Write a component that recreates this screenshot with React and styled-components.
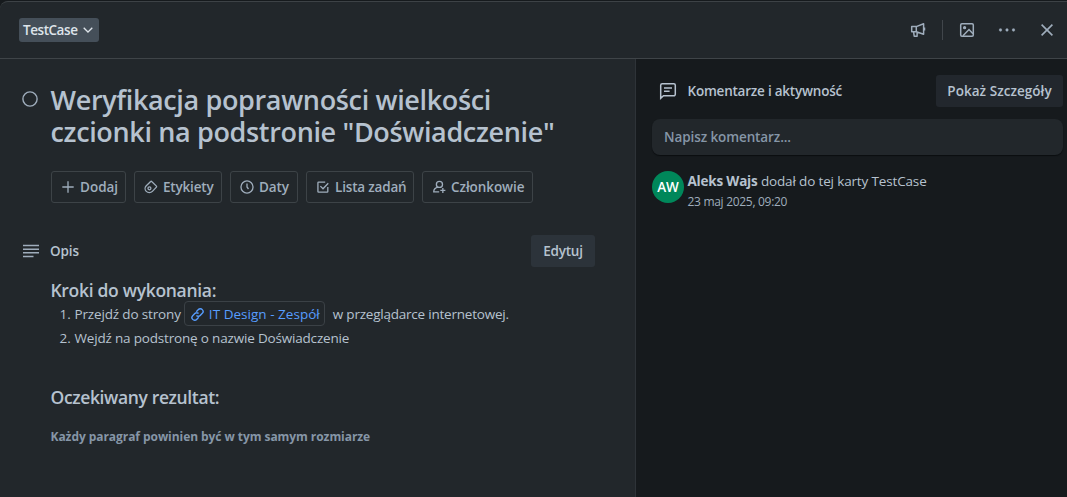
import React from "react";
import styled, { createGlobalStyle } from "styled-components";

const Global = createGlobalStyle`
  * { box-sizing: border-box; }
  body {
    margin: 0;
    background: #161a1d;
    color: #b6c2cf;
    font: 400 13.5px/20px "Open Sans", "Noto Sans", sans-serif;
  }
  h1, h2, h3, p, ol { margin: 0; padding: 0; font-size: inherit; font-weight: inherit; }
  button { font: inherit; color: inherit; }
`;

const Text = styled.span`
  white-space: pre;
  letter-spacing: ${(p) => p.$ls || 0}px;
`;

const Svg = styled.svg`
  display: block;
  flex: none;
  fill: none;
  stroke: currentColor;
  stroke-width: ${(p) => p.$stroke || 1.4};
`;

const Dialog = styled.div`
  display: flex;
  flex-direction: column;
  height: 497px;
  padding-top: 1px;
  overflow: hidden;
`;

const Header = styled.header`
  display: flex;
  align-items: center;
  justify-content: space-between;
  height: 58px;
  flex: none;
  padding-left: 19px;
  background: #22272b;
  border-top: 1px solid #3d4246;
  border-bottom: 1px solid #3f4448;
  border-top-left-radius: 8px;
`;

const ListButton = styled.button`
  display: flex;
  align-items: center;
  gap: 6px;
  width: 80px;
  height: 24px;
  padding: 0 0 0 4px;
  border: 0;
  border-radius: 3px;
  background: #454f59;
  color: #dee4ea;
  font-weight: 600;
`;

const HeaderActions = styled.div`
  display: flex;
  align-items: center;
`;

const IconButton = styled.button`
  display: grid;
  place-items: center;
  width: 40px;
  height: 32px;
  padding: 0;
  border: 0;
  background: none;
  color: #9fadbc;
`;

const Separator = styled.i`
  width: 1px;
  height: 20px;
  margin: 0 4px;
  background: #41464b;
`;

const Body = styled.div`
  display: flex;
  flex: 1;
`;

const Main = styled.main`
  width: 636px;
  padding: 25px 40px 0 22px;
  background: #22272b;
  border-right: 1px solid #2e3338;
`;

const TitleRow = styled.div`
  display: flex;
  gap: 12.5px;
  color: #9fadbc;

  svg { margin-top: 7px; }
`;

const Title = styled.h1`
  color: #b6c2cf;
  font-size: 27px;
  font-weight: 600;
  line-height: 32px;
  letter-spacing: -0.35px;
`;

const Toolbar = styled.div`
  display: flex;
  gap: 8px;
  margin: 23px 0 0 29px;
`;

const ToolButton = styled.button`
  display: flex;
  align-items: center;
  gap: 5px;
  width: ${(p) => p.$width}px;
  height: 32px;
  padding: 0 0 0 9px;
  border: 1px solid #3d4347;
  border-radius: 3px;
  background: none;
  color: #9fadbc;
  font-weight: 600;
`;

const SectionHead = styled.div`
  display: flex;
  align-items: center;
  height: 32px;
  font-weight: 600;
`;

const DescriptionHead = styled(SectionHead)`
  margin-top: 32px;
  padding-left: 1px;
  gap: 11px;

  svg { color: #9fadbc; }
`;

const FilledButton = styled.button`
  display: grid;
  place-items: center;
  width: ${(p) => p.$width}px;
  height: 32px;
  margin-left: auto;
  padding: 0;
  border: 0;
  border-radius: 3px;
  background: ${(p) => p.$bg};
  font-weight: 600;
`;

const Description = styled.section`
  margin: 11px 0 0 28.5px;
`;

const Subheading = styled.h3`
  font-size: 17.5px;
  font-weight: 600;
  line-height: 24px;
`;

const Steps = styled.ol`
  list-style: none;
  margin: 0 0 35px 9px;
`;

const Step = styled.li`
  display: flex;
  align-items: center;
  height: 24px;
`;

const StepNumber = styled(Text)`
  width: 15px;
`;

const LinkCard = styled.a`
  display: flex;
  align-items: center;
  gap: 5px;
  width: 141px;
  height: 25px;
  margin: 0 8px 1px 3px;
  padding: 1px 0 0 6px;
  border: 1px solid #3b4146;
  border-radius: 4px;
  color: #579dff;
`;

const Note = styled.p`
  margin-top: 18px;
  color: #8696a7;
  font-size: 12px;
  font-weight: 700;
`;

const Sidebar = styled.aside`
  flex: 1;
  padding: 16px 4px 0 16px;
`;

const ActivityHead = styled(SectionHead)`
  padding-left: 7px;
  gap: 10.5px;
`;

const CommentBox = styled.div`
  display: flex;
  align-items: center;
  height: 36px;
  margin-top: 12px;
  padding-left: 12px;
  border-radius: 8px;
  background: #22272b;
  box-shadow: 0 1px 1px #0b0e10;
  color: #8696a7;
  font-weight: 600;
`;

const Entry = styled.div`
  display: flex;
  gap: 3.5px;
  margin-top: 16px;
`;

const Avatar = styled.div`
  display: grid;
  place-items: center;
  width: 32px;
  height: 32px;
  border-radius: 50%;
  background: #00875a;
  color: #fff;
  font: 600 13.5px/32px "Open Sans", sans-serif;
`;

const Author = styled(Text)`
  font-weight: 700;
`;

const Timestamp = styled.div`
  margin-top: 1px;
  color: #9fadbc;
  font-size: 12px;
`;

const tools = [
  { label: "Dodaj", width: 75, ls: 0, icon: <path d="M8 1.5v13M1.5 8h13" /> },
  {
    label: "Etykiety", width: 88, ls: -0.18,
    icon: <><path d="M8.8 1.7 14.2 7a.8.8 0 0 1 0 1.1L9.6 13a4.9 4.9 0 0 1-7 0 4.6 4.6 0 0 1 0-6.5l5-4.8a.8.8 0 0 1 1.2 0z" /><circle cx="6.2" cy="9.5" r="1.7" /></>,
  },
  { label: "Daty", width: 68, ls: -0.07, icon: <><circle cx="8" cy="8" r="6.9" /><path d="M8 4v4l1.7 2.3" /></> },
  {
    label: "Lista zadań", width: 108, ls: -0.18,
    icon: <><path d="M13.5 8v5a.8.8 0 0 1-.8.8H3a.8.8 0 0 1-.8-.8V3.2a.8.8 0 0 1 .8-.8h7.5" /><path d="m5 7 3 3 6-6.3" /></>,
  },
  {
    label: "Członkowie", width: 111, ls: -0.07,
    icon: <><circle cx="8.5" cy="5" r="3.5" /><path d="M7 8.2c-3 .6-5 2.4-5 5.3h6.2M12.4 9v5.8M9.5 11.9h5.8" /></>,
  },
];

export default function App() {
  return (
    <>
      <Global />
      <Dialog>
        <Header>
          <ListButton>
            <Text $ls={-0.45}>TestCase</Text>
            <Svg width="10" height="6" viewBox="0 0 10 6" $stroke={1.3}><path d="m.7.7 4.3 4.3L9.3.7" /></Svg>
          </ListButton>
          <HeaderActions>
            <IconButton>
              <Svg width="16" height="16" viewBox="0 0 16 16" $stroke={1.5}>
                <path d="M1.7 4.6h4.6L13.6 1.7v10.6L6.3 9.8H1.7zM6.3 4.6v5.2M3.6 9.8l.6 4.4h2.9V10.2M14.5 5.6v2.8" strokeLinejoin="round" />
              </Svg>
            </IconButton>
            <Separator />
            <IconButton>
              <Svg width="16" height="16" viewBox="0 0 16 16" $stroke={1.5}>
                <rect x="1.7" y="1.7" width="12.6" height="12.6" rx="1.2" />
                <circle cx="5.6" cy="5.7" r=".9" fill="currentColor" />
                <path d="m4 13.8 6-6.3 4 4.2" />
              </Svg>
            </IconButton>
            <IconButton>
              <Svg width="18" height="4" viewBox="0 0 18 4" $stroke={0.2}>
                <g fill="currentColor"><circle cx="2.5" cy="2" r="1.4" /><circle cx="9" cy="2" r="1.4" /><circle cx="15.5" cy="2" r="1.4" /></g>
              </Svg>
            </IconButton>
            <IconButton>
              <Svg width="12" height="12" viewBox="0 0 12 12" $stroke={1.6}><path d="m.6.6 10.8 10.8M11.4.6.6 11.4" /></Svg>
            </IconButton>
          </HeaderActions>
        </Header>
        <Body>
          <Main>
            <TitleRow>
              <Svg width="16" height="16" viewBox="0 0 16 16"><circle cx="8" cy="8" r="7.1" /></Svg>
              <Title>
                Weryfikacja poprawności wielkości<br />
                czcionki na podstronie "Doświadczenie"
              </Title>
            </TitleRow>
            <Toolbar>
              {tools.map((t) => (
                <ToolButton key={t.label} $width={t.width}>
                  <Svg width="14" height="14" viewBox="0 0 16 16" $stroke={1.5}>{t.icon}</Svg>
                  <Text $ls={t.ls}>{t.label}</Text>
                </ToolButton>
              ))}
            </Toolbar>
            <DescriptionHead>
              <Svg width="16" height="14" viewBox="0 0 16 14" $stroke={1.6}><path d="M0 1.5h16M0 5.2h16M0 8.8h16M0 12.5h10.5" /></Svg>
              <Text $ls={-0.1}>Opis</Text>
              <FilledButton $width={64} $bg="#2c333a"><Text $ls={-0.2}>Edytuj</Text></FilledButton>
            </DescriptionHead>
            <Description>
              <Subheading><Text $ls={-0.31}>Kroki do wykonania:</Text></Subheading>
              <Steps>
                <Step>
                  <StepNumber>1.</StepNumber>
                  <Text $ls={-0.15}>Przejdź do strony</Text>
                  <LinkCard>
                    <Svg width="13" height="13" viewBox="0 0 16 16" $stroke={1.7}>
                      <path d="m6.5 4.6 2.6-2.7a3.2 3.2 0 0 1 4.8.1 3.2 3.2 0 0 1 0 4.5l-2.6 2.7a3.2 3.2 0 0 1-4.6 0M9.5 11.4l-2.6 2.7a3.2 3.2 0 0 1-4.8-.1 3.2 3.2 0 0 1 0-4.5l2.6-2.7a3.2 3.2 0 0 1 4.6 0" />
                    </Svg>
                    <Text $ls={0.03}>IT Design - Zespół</Text>
                  </LinkCard>
                  <Text $ls={-0.22}>w przeglądarce internetowej.</Text>
                </Step>
                <Step>
                  <StepNumber>2.</StepNumber>
                  <Text $ls={-0.18}>Wejdź na podstronę o nazwie Doświadczenie</Text>
                </Step>
              </Steps>
              <Subheading><Text $ls={-0.37}>Oczekiwany rezultat:</Text></Subheading>
              <Note><Text $ls={-0.06}>Każdy paragraf powinien być w tym samym rozmiarze</Text></Note>
            </Description>
          </Main>
          <Sidebar>
            <ActivityHead>
              <Svg width="18" height="18" viewBox="0 0 18 18" $stroke={1.5}>
                <path d="M1.7 16.3V3.2a1.5 1.5 0 0 1 1.5-1.5h11.6a1.5 1.5 0 0 1 1.5 1.5v9.1a1.5 1.5 0 0 1-1.5 1.5H4.5zM5 6h8M5 9.3h5.6" />
              </Svg>
              <Text $ls={-0.22}>Komentarze i aktywność</Text>
              <FilledButton $width={127} $bg="#22272d"><Text $ls={0.05}>Pokaż Szczegóły</Text></FilledButton>
            </ActivityHead>
            <CommentBox><Text $ls={-0.1}>Napisz komentarz...</Text></CommentBox>
            <Entry>
              <Avatar><Text>AW</Text></Avatar>
              <div>
                <div><Author $ls={-0.2}>Aleks Wajs</Author><Text $ls={-0.15}> dodał do tej karty TestCase</Text></div>
                <Timestamp><Text $ls={-0.3}>23 maj 2025, 09:20</Text></Timestamp>
              </div>
            </Entry>
          </Sidebar>
        </Body>
      </Dialog>
    </>
  );
}
